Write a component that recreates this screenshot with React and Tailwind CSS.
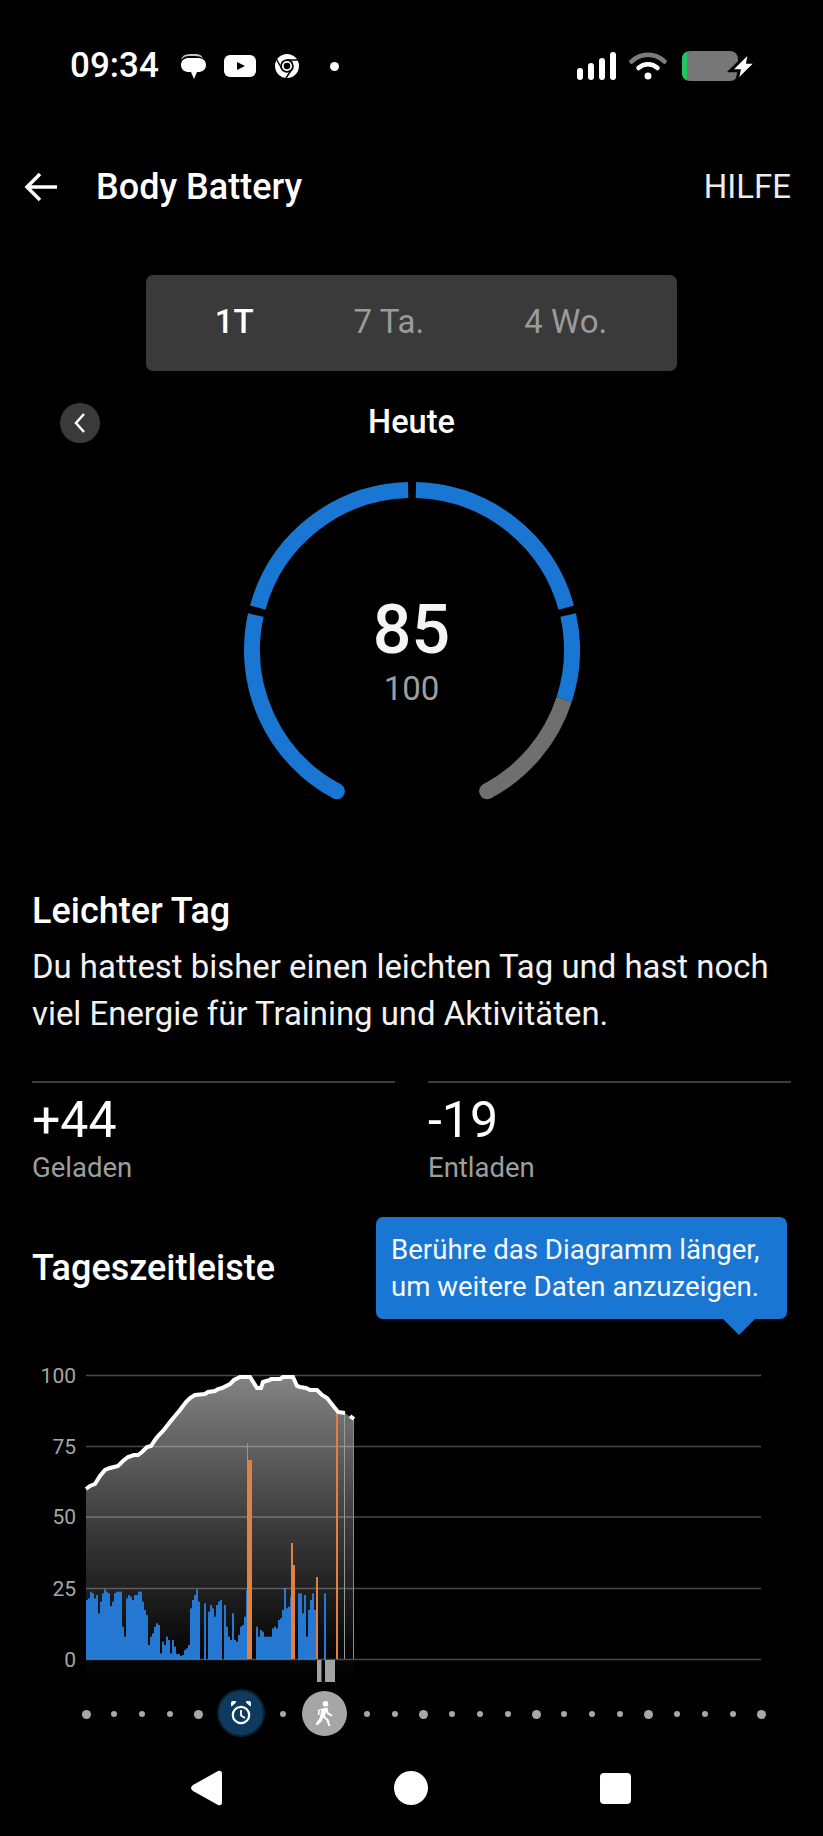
// gauge geometry, angles are clockwise from 12 o'clock
const CX = 168
const CY = 168
const R = 160

function polar(deg) {
  const a = (deg * Math.PI) / 180
  return [CX + R * Math.sin(a), CY - R * Math.cos(a)]
}

function arc(from, to) {
  const [x1, y1] = polar(from)
  const [x2, y2] = polar(to)
  const large = to - from > 180 ? 1 : 0
  return `M${x1} ${y1}A${R} ${R} 0 ${large} 1 ${x2} ${y2}`
}

// tops of the blue stress bars, 2px step from x=86, read off the reference (388 = baseline)
const blueTops = [
  210, 205, 185, 190, 205, 195, 250, 215, 190, 178, 185, 190, 228, 215, 190, 185, 185, 185, 290, 320,
  205, 195, 200, 210, 195, 195, 185, 185, 215, 240, 255, 345, 320, 310, 290, 280, 285, 370, 335, 345,
  320, 330, 370, 330, 350, 372, 372, 378, 375, 360, 355, 345, 235, 210, 195, 178, 215, 388, 388, 220,
  388, 245, 225, 235, 260, 225, 215, 210, 388, 225, 290, 320, 330, 250, 330, 335, 315, 290, 285, 260,
  180, 388, 388, 388, 388, 290, 320, 300, 305, 320, 320, 320, 320, 295, 290, 295, 270, 265, 240, 175,
  235, 230, 200, 388, 388, 388, 190, 190, 250, 195, 320, 240, 210, 190, 240, 388, 388, 388, 388, 190,
]

const linePts = [
  [86, 1489], [90, 1486], [95, 1484], [100, 1476], [105, 1470], [110, 1468], [114, 1467], [118, 1466], [123, 1461],
  [128, 1457], [134, 1455], [138, 1455], [142, 1452], [147, 1447], [151, 1446], [155, 1440], [158, 1436],
  [163, 1431], [170, 1422], [180, 1410], [186, 1402], [190, 1398], [195, 1395], [205, 1394], [208, 1392], [215, 1391], [218, 1389], [222, 1388],
  [230, 1384], [234, 1380], [240, 1377], [250, 1377], [257, 1388], [261, 1388], [263, 1382], [270, 1380], [271, 1379],
  [280, 1379], [283, 1377], [293, 1377], [297, 1386], [300, 1387], [306, 1388], [310, 1390], [317, 1390], [322, 1395],
  [327, 1398], [338, 1412], [345, 1413],
]

const orange = [
  [247, 1, 1443], [248, 4, 1460], [291, 2, 1543], [293, 2, 1565], [316, 2, 1577], [336, 2, 1413],
]

const ticks = [
  ['100', 1375.5],
  ['75', 1446.5],
  ['50', 1517],
  ['25', 1588.5],
  ['0', 1659.5],
]

const dots = Array.from({ length: 25 }, (_, i) => i)

function StatusBar() {
  return (
    <div className="flex h-[132px] items-center pl-[70px] pr-[70px]">
      <span className="w-[90px] text-[35px] font-medium text-white">09:34</span>
      {/* messages */}
      <svg className="ml-[20px]" width="26" height="26" viewBox="0 0 26 26">
        <path d="M1 7q1-6 9-6h6q5 0 7 4q-3-2-8-2H9q-5 0-8 4z" fill="#c4c4c4" />
        <path d="M9 5h9c4.500 0 8 2.500 8 7s-3.500 7-8 7h-1l-3 7-3-7H9c-4.500 0-8-2.500-8-7s3.500-7 8-7z" fill="#fff" />
      </svg>
      {/* youtube */}
      <svg className="ml-[18px]" width="32" height="22" viewBox="0 0 32 22">
        <rect width="32" height="22" rx="6" fill="#fff" />
        <path d="M13 7l8 4-8 4z" fill="#000" />
      </svg>
      {/* chrome */}
      <svg className="ml-[19px]" width="24" height="24" viewBox="0 0 24 24">
        <circle cx="12" cy="12" r="12" fill="#fff" />
        <path d="M12 6h12M7 15L1 4.500M17 15l-6 9" stroke="#000" strokeWidth="1.500" />
        <circle cx="12" cy="12" r="6.800" fill="#000" />
        <circle cx="12" cy="12" r="4.200" fill="none" stroke="#fff" strokeWidth="1.800" />
      </svg>
      <div className="ml-[31px] h-[9px] w-[9px] rounded-full bg-white" />

      <div className="ml-auto flex items-center">
        <svg width="39" height="28" viewBox="0 0 39 28" fill="#fff">
          <rect x="0" y="16" width="6" height="12" rx="3" />
          <rect x="11" y="11" width="6" height="17" rx="3" />
          <rect x="22" y="6" width="6" height="22" rx="3" />
          <rect x="33" y="0" width="6" height="28" rx="3" />
        </svg>
        <svg className="ml-[13px]" width="38" height="28" viewBox="0 0 38 28" fill="none" strokeLinecap="round">
          <path d="M2.500 9.500C12 0.500 26 0.500 35.500 9.500" stroke="#7c7c7c" strokeWidth="4.500" />
          <path d="M9.500 16C15 11 23 11 28.500 16" stroke="#fff" strokeWidth="4.500" />
          <circle cx="19" cy="24" r="3.500" fill="#fff" />
        </svg>
        <svg className="-mr-[1px] ml-[15px] mt-[1px]" width="72" height="32" viewBox="0 0 72 32">
          <rect x="0" y="0" width="56" height="30" rx="8" fill="#777" />
          <path d="M0 8a8 8 0 0 1 5-7.400V29.400A8 8 0 0 1 0 22z" fill="#22c55e" />
          <path d="M65.300 5L52 18.300h7L57.300 26l13.400-13.300H64z" fill="#fff" stroke="#000" strokeWidth="6" paintOrder="stroke" />
        </svg>
      </div>
    </div>
  )
}

function Gauge() {
  return (
    <div className="relative mx-auto h-[336px] w-[336px]">
      <svg width="336" height="336" viewBox="0 0 336 336" fill="none" strokeWidth="16">
        <path d={arc(-152, -77.4)} stroke="#1976d2" />
        <path d={arc(-74.6, -1.4)} stroke="#1976d2" />
        <path d={arc(1.4, 74.6)} stroke="#1976d2" />
        <path d={arc(77.4, 108)} stroke="#1976d2" />
        <path d={arc(108, 152)} stroke="#6f6f6f" />
        <circle cx={polar(-152)[0]} cy={polar(-152)[1]} r="8" fill="#1976d2" stroke="none" />
        <circle cx={polar(152)[0]} cy={polar(152)[1]} r="8" fill="#6f6f6f" stroke="none" />
      </svg>
      <div className="absolute inset-x-0 top-[114px] text-center text-[68px] font-medium leading-[68px] text-[#f5f5f5]">85</div>
      <div className="absolute inset-x-0 top-[187px] text-center text-[33px] leading-[40px] text-[#9e9e9e]">100</div>
    </div>
  )
}

function Chart() {
  const area = [...linePts, [354, 1420], [354, 1690], [86, 1690]]
  return (
    <svg className="block" width="823" height="330" viewBox="0 1360 823 330">
      <defs>
        <linearGradient id="fade" x1="0" y1="1375" x2="0" y2="1690" gradientUnits="userSpaceOnUse">
          <stop offset="0" stopColor="#848484" />
          <stop offset="0.45" stopColor="#3f3f3f" />
          <stop offset="0.88" stopColor="#060606" />
          <stop offset="1" stopColor="#000" />
        </linearGradient>
      </defs>
      <polygon points={area.map((p) => p.join(',')).join(' ')} fill="url(#fade)" />
      {blueTops.map((top, i) =>
        top < 388 ? <rect key={i} x={86 + i * 2} y={1530 + top / 3} width="2" height={(388 - top) / 3} fill="#2478d2" /> : null
      )}
      {ticks.map(([label, y]) => (
        <g key={label}>
          <line x1="86" x2="761" y1={y} y2={y} stroke="#fff" strokeOpacity="0.28" strokeWidth="1.500" />
          <text x="76" y={y + 7} textAnchor="end" fontSize="21" fill="#a6a6a6">{label}</text>
        </g>
      ))}
      {orange.map(([x, w, top]) => (
        <rect key={x} x={x} y={top} width={w} height={1659 - top} fill="#e0813f" />
      ))}
      <rect x="344" y="1413" width="1" height="246" fill="#9a9a9a" />
      <rect x="353" y="1419" width="1" height="240" fill="#8a8a8a" />
      <polyline points={linePts.map((p) => p.join(',')).join(' ')} fill="none" stroke="#fff" strokeWidth="4" />
      <polyline points="350,1416 354,1419" fill="none" stroke="#fff" strokeWidth="4" />
      <rect x="317" y="1660" width="4.500" height="22" fill="#a3a3a3" />
      <rect x="325" y="1660" width="10" height="22" fill="#a3a3a3" />
    </svg>
  )
}

function TimelineDots() {
  return (
    <div className="relative ml-[86px] flex h-[48px] w-[675px] items-center justify-between">
      {dots.map((i) => (
        <div key={i} className="flex w-0 justify-center">
          <div className={i % 4 === 0 ? 'h-[9px] w-[9px] shrink-0 rounded-full bg-[#a8a8a8]' : 'h-[6px] w-[6px] shrink-0 rounded-full bg-[#a8a8a8]'} />
        </div>
      ))}
      {/* sleep alarm marker */}
      <div className="absolute left-[133px] top-[1px] flex h-[44px] w-[44px] items-center justify-center rounded-full bg-[#0f3a60] ring-[2px] ring-[#0b2233]">
        <svg width="20" height="24" viewBox="0 0 20 24">
          <circle cx="10" cy="14" r="8.200" fill="none" stroke="#fff" strokeWidth="2.200" />
          <path d="M10 9v5.500l4 2.500" fill="none" stroke="#fff" strokeWidth="1.800" />
          <path d="M0.500 5L5 1q-3-1.500-4.500 0T0.500 5zM19.500 5L15 1q3-1.500 4.500 0T19.500 5z" fill="#fff" stroke="#fff" strokeWidth="1" />
        </svg>
      </div>
      {/* walking marker */}
      <div className="absolute left-[216px] top-[1px] flex h-[45px] w-[45px] items-center justify-center rounded-full bg-[#a6a6a6]">
        <svg width="18" height="25" viewBox="0 0 18 25">
          <circle cx="9.500" cy="2.800" r="2.800" fill="#fff" />
          <path d="M8 7l3.500-0.500 1 5 4 2.500-1 1.500-4.500-2.500-1-2-1 4.500 3.500 3 2 6.500-2 .5-2-6-3.500-3-1 3.500L1 24.500-.500 23l4-5.500 2-9-2 1.500V14H2V9z" fill="#fff" />
        </svg>
      </div>
    </div>
  )
}

export default function App() {
  return (
    <div className="h-[1836px] w-[823px] overflow-hidden bg-black font-['Roboto',sans-serif] text-white">
      <StatusBar />

      {/* Header */}
      <div className="flex h-[110px] items-center pl-[24px] pr-[32px]">
        <svg width="34" height="30" viewBox="0 0 34 30" fill="none" stroke="#fff" strokeWidth="3.500">
          <path d="M33 15H3M16 2L3 15l13 13" />
        </svg>
        <h1 className="ml-[38px] text-[36px] font-medium">Body Battery</h1>
        <span className="ml-auto text-[33px] text-[#ececec]">HILFE</span>
      </div>

      {/* Range tabs */}
      <div className="mx-[146px] mt-[33px] flex h-[96px] items-center justify-center gap-[100px] rounded-[7px] bg-[#3a3a3a] pb-[2px] pr-[1px] text-[33px] text-[#9b9b9b]">
        <span className="font-medium text-white">1T</span>
        <span>7 Ta.</span>
        <span>4 Wo.</span>
      </div>

      {/* Day switcher */}
      <div className="relative mt-[26px] flex h-[50px] items-center justify-center">
        <button className="absolute left-[60px] top-[6px] flex h-[40px] w-[40px] items-center justify-center rounded-full bg-[#3a3a3a]">
          <svg width="14" height="22" viewBox="0 0 14 22" fill="none" stroke="#fff" strokeWidth="2.500">
            <path d="M11 2L3 11l8 9" />
          </svg>
        </button>
        <span className="text-[32.5px] font-medium">Heute</span>
      </div>

      <div className="mt-[35px]">
        <Gauge />
      </div>

      {/* Summary */}
      <div className="mt-[71px] px-[32px]">
        <h2 className="text-[36px] font-medium leading-[44px]">Leichter Tag</h2>
        <p className="mt-[10px] text-[32.9px] leading-[47px] text-[#f2f2f2]">
          Du hattest bisher einen leichten Tag und hast noch viel Energie für Training und Aktivitäten.
        </p>
      </div>

      {/* Stats */}
      <div className="mt-[44px] grid grid-cols-2 gap-[33px] px-[32px]">
        <div className="border-t-[2px] border-[#3c3c3c] pt-[9px]">
          <div className="text-[50px] leading-[56px]">+44</div>
          <div className="mt-[4px] text-[27.5px] leading-[32px] text-[#9e9e9e]">Geladen</div>
        </div>
        <div className="border-t-[2px] border-[#3c3c3c] pt-[9px]">
          <div className="text-[50px] leading-[56px]">-19</div>
          <div className="mt-[4px] text-[27.5px] leading-[32px] text-[#9e9e9e]">Entladen</div>
        </div>
      </div>

      {/* Timeline */}
      <div className="mt-[33px] flex items-center justify-between pl-[32px] pr-[36px]">
        <h2 className="text-[36px] font-medium">Tageszeitleiste</h2>
        <div className="relative w-[411px] rounded-[7px] bg-[#1976d2] py-[14px] pl-[15px] pr-[16px] text-[27.6px] leading-[37px] text-[#f5f9ff]">
          <p>Berühre das Diagramm länger,</p>
          <p>um weitere Daten anzuzeigen.</p>
          <div className="absolute right-[32px] top-full h-0 w-0 border-x-[16px] border-t-[16px] border-x-transparent border-t-[#1976d2]" />
        </div>
      </div>

      <div className="mt-[41px]">
        <Chart />
      </div>
      <TimelineDots />

      {/* Android nav */}
      <div className="relative mt-[31px] h-[40px]">
        <svg className="absolute left-[190px] top-[1px]" width="33" height="36" viewBox="0 0 33 36">
          <path d="M28 1L3 15q-4 3 0 6l25 14q4 1 4-3V4q0-4-4-3z" fill="#fff" />
        </svg>
        <div className="absolute left-[394px] top-[2px] h-[34px] w-[34px] rounded-full bg-white" />
        <div className="absolute left-[600px] top-[4px] h-[31px] w-[31px] rounded-[4px] bg-white" />
      </div>
    </div>
  )
}
